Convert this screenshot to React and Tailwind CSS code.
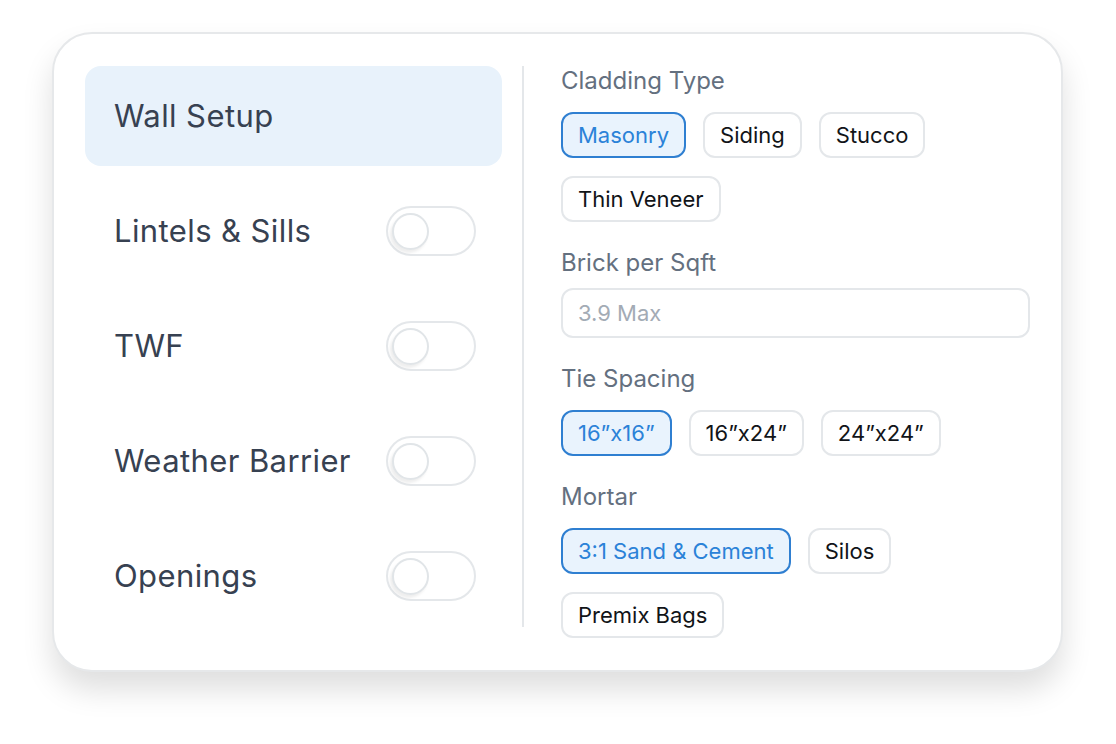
import { useState } from 'react';

const sections = [
  { label: 'Cladding Type', options: ['Masonry', 'Siding', 'Stucco', 'Thin Veneer'], selected: 'Masonry' },
  { label: 'Brick per Sqft', input: '3.9 Max' },
  { label: 'Tie Spacing', options: ['16”x16”', '16”x24”', '24”x24”'], selected: '16”x16”' },
  { label: 'Mortar', options: ['3:1 Sand & Cement', 'Silos', 'Premix Bags'], selected: '3:1 Sand & Cement' },
];

const navItems = ['Lintels & Sills', 'TWF', 'Weather Barrier', 'Openings'];

const Toggle = () => (
  <div className="w-[90px] h-[50px] rounded-full border-2 border-[#e4e7ea] bg-white flex items-center pl-[4px]">
    <div className="w-[37px] h-[37px] rounded-full border-2 border-[#e1e5e8] bg-white shadow-[-2px_3px_3px_rgba(0,0,0,0.07)]" />
  </div>
);

const Chip = ({ label, active }) => (
  <button
    className={
      active
        ? 'h-[46px] px-[15px] rounded-[12px] border-2 border-[#2f7fd1] bg-[#e9f3fd] text-[#2b82d8] text-[22px] flex items-center'
        : 'h-[46px] px-[15px] rounded-[12px] border-2 border-[#e4e7ea] bg-white text-[#111418] text-[22px] flex items-center'
    }
  >
    {label}
  </button>
);

const App = () => {
  const [active] = useState('Wall Setup');

  return (
    <div className="min-h-screen bg-white pt-[32px] pl-[52px] font-['Inter',sans-serif]">
      <div className="w-[1011px] rounded-[40px] border-2 border-[#e6e8ea] bg-white shadow-[0_18px_30px_rgba(0,0,0,0.13)] flex pl-[31px] pr-[31px] pt-[32px] pb-[32px]">
        {/* left nav */}
        <div className="w-[417px] flex flex-col gap-[15px] self-start">
          <div className="h-[100px] rounded-[16px] bg-[#e8f2fb] flex items-center pl-[29px]">
            <span className="text-[31px] tracking-[0.4px] text-[#374151]">{active}</span>
          </div>
          {navItems.map((item) => (
            <div key={item} className="h-[100px] flex items-center justify-between pl-[29px] pr-[26px]">
              <span className="text-[31px] tracking-[0.4px] text-[#374151]">{item}</span>
              <Toggle />
            </div>
          ))}
        </div>

        <div className="ml-[20px] w-[2px] h-[561px] bg-[#e4e7ea]" />

        {/* right options */}
        <div className="ml-[37px] flex-1 flex flex-col gap-[26px]">
          {sections.map((s) => (
            <div key={s.label} className="flex flex-col">
              <div className="h-[30px] leading-[30px] text-[24px] text-[#64707f]">{s.label}</div>
              {s.input ? (
                <div className="mt-[10px] h-[50px] rounded-[12px] border-2 border-[#e4e7ea] flex items-center pl-[15px] text-[22px] text-[#a3abb5]">
                  {s.input}
                </div>
              ) : (
                <div className="mt-[16px] flex flex-wrap gap-x-[17px] gap-y-[18px]">
                  {s.options.map((o) => (
                    <Chip key={o} label={o} active={o === s.selected} />
                  ))}
                </div>
              )}
            </div>
          ))}
        </div>
      </div>
    </div>
  );
};

export default App;
